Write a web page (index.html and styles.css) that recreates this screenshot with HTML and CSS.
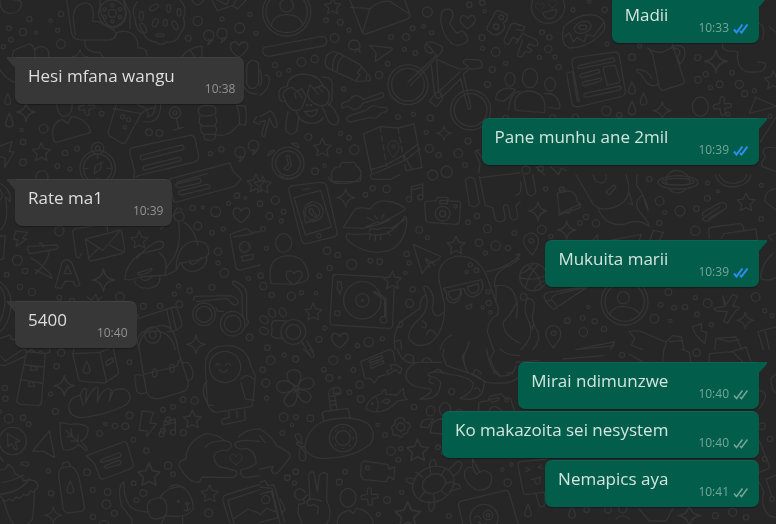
FILE: index.html
```
<!DOCTYPE html>
<html lang="sn">
<head>
<meta charset="utf-8">
<meta name="viewport" content="width=device-width, initial-scale=1">
<title>Chat</title>
<link rel="stylesheet" href="styles.css">
</head>
<body>
<svg class="wallpaper" viewBox="0 0 2328 1572" preserveAspectRatio="xMidYMid slice" aria-hidden="true">
  <defs>
    <path id="ticks" d="M2 13L7 19 19 3M14 16L17 19 29 3"/>
    <path id="star" d="M0-27L8-9 27-6 13 7 17 26 0 17-17 26-13 7-27-6-8-9Z"/>
    <path id="sparkle" d="M0-28Q3-3 28 0Q3 3 0 28Q-3 3-28 0Q-3-3 0-28Z"/>
    <path id="heart" d="M0 24C-14 15-27 4-23-10C-19-22-5-20 0-9C6-21 22-22 24-9C26 4 12 15 0 24Z"/>
    <path id="drop" d="M0-20C4-8 11 0 10 9C8 20-8 20-10 9C-11 0-4-8 0-20Z"/>
    <path id="plus" d="M-6-26Q0-30 5-25L6-7 24-8Q30-3 25 4L7 7 9 24Q3 30-4 25L-7 8-24 9Q-30 3-25-4L-8-7Z"/>
    <path id="quote" d="M12 8A16 16 0 1 1 14-12Q20 10-3 25Q4 12 0 8"/>
    <path id="pin" d="M0 34Q-25 5-22-10A22 22 0 0 1 22-10Q25 5 0 34ZM-6-9a7 7 0 1 0 14 0a7 7 0 1 0-14 0"/>
    <g id="note"><path d="M-10 16V-20L24-28V10M-10-10L24-18"/><circle cx="-17" cy="18" r="8"/><circle cx="17" cy="12" r="8"/></g>
    <g id="camera"><path d="M-48-25L-20-27-16-37H14L18-26 48-25Q54-24 54-18L50 34Q48 44 38 44L-42 38Q-52 37-51 26L-54-18Q-54-25-48-25ZM-8-28H14V-18H-8Z"/><circle cx="0" cy="12" r="22"/><circle cx="0" cy="12" r="9"/><circle cx="39" cy="-10" r="5"/></g>
    <g id="people"><ellipse cx="0" cy="-44" rx="23" ry="29"/><path d="M-45 45Q-50-5 0-5Q52 0 44 60L-35 54Q-44 54-45 45Z"/><ellipse cx="60" cy="-25" rx="16" ry="20"/><path d="M42 3Q82-2 90 40Q91 48 82 48L54 44"/></g>
    <g id="profile"><circle r="72"/><circle r="62"/><circle cy="-20" r="20"/><path d="M-46 42Q-40 8 0 8Q42 8 48 40"/></g>
    <g id="speech"><path d="M-96-30L78-68Q92-70 96-56L106-6Q107 8 94 12L-72 52-90 60-86 40-100-14Q-102-27-96-30Z"/><path d="M-66-8L50-38Q62-40 62-30Q61-26 54-24L-64 6Q-74 2-66-8ZM-58 24L46-2Q56-2 52 8L-54 36Q-66 34-58 24Z"/></g>
  </defs>
  <g id="scatter"></g>

  <!-- upper left -->
  <g>
    <path d="M0 0Q0 38 28 40Q60 42 65 12Q60-4 42 0M200 0Q205 40 215 100Q220 122 255 120H330Q356 112 344 92L295 64H278Q288 5 250 10Q218 16 220 60L226 105M255 120Q250 158 300 157L310 172M300 0Q298 66 340 84Q390 70 376 20L370 0M346 106Q350 92 376 94Q415 100 414 144Q440 140 442 168M372 0L390 40V86"/>
    <circle cx="336" cy="40" r="40"/><circle cx="337" cy="40" r="12"/>
    <circle cx="337" cy="16" r="5"/><circle cx="360" cy="28" r="5"/><circle cx="360" cy="52" r="5"/><circle cx="337" cy="64" r="5"/><circle cx="314" cy="52" r="5"/><circle cx="314" cy="28" r="5"/>
    <path d="M412 5Q392 30 405 54Q406 92 430 100Q440 124 468 126Q482 140 500 126Q534 128 540 100Q560 82 550 54Q564 26 540 0"/>
    <ellipse cx="462" cy="22" rx="7" ry="15" transform="rotate(60 462 22)"/><ellipse cx="506" cy="25" rx="6" ry="12"/><ellipse cx="466" cy="68" rx="8" ry="13" transform="rotate(25 466 68)"/><ellipse cx="525" cy="76" rx="7" ry="14" transform="rotate(-25 525 76)"/><ellipse cx="430" cy="84" rx="7" ry="16" transform="rotate(-30 430 84)"/><ellipse cx="480" cy="106" rx="13" ry="4"/><ellipse cx="496" cy="68" rx="6" ry="10"/><ellipse cx="537" cy="37" rx="6" ry="11"/><ellipse cx="424" cy="48" rx="6" ry="14"/>
    <path d="M38 172Q36 148 54 145L88 132Q108 136 104 172M104 150Q116 134 134 142Q150 150 145 172M0 210Q20 240 48 248M544 172Q566 140 606 138V172M570 150L584 170M636 0L652 32 700 16 712-8M650 0L680 14 690-6M700 20L714 26 744-6M575 0Q595 30 610 0"/>
    <path d="M740 210V250Q756 282 776 250V190Q754 170 742 194ZM724 240Q734 282 770 282M170 312Q172 344 192 350Q218 346 216 312M160 418Q150 370 186 358L204 370 214 350Q262 354 272 398L166 428ZM350 310L324 398Q326 410 340 414L366 430Q376 432 380 420L424 340M338 326L420 340M430 365Q482 374 482 312M440 350Q466 350 466 312M410 312L440 328 466 322M440 328L446 350M440 328L420 345"/>
    <circle cx="368" cy="350" r="6"/><circle cx="386" cy="359" r="6"/><circle cx="374" cy="382" r="5"/><circle cx="525" cy="338" r="17"/><circle cx="525" cy="338" r="6"/><path d="M529 354L536 386M522 390L550 382"/>
    <path d="M618 316Q590 318 596 340Q602 350 622 348L645 344Q652 324 640 318ZM600 350Q592 376 610 378H640Q656 370 646 350M604 378Q598 402 615 403H642Q656 392 645 378M612 403Q608 422 630 421Q650 420 646 403M646 403Q680 414 706 384L720 370M710 316Q720 340 718 372L736 376Q742 346 736 318Z"/>
    <path d="M0 438L36 425 28 454 42 456 14 502 15 474 0 470"/>
    <circle cx="293" cy="505" r="53"/><circle cx="293" cy="505" r="43"/><circle cx="293" cy="445" r="18"/><circle cx="293" cy="445" r="7"/><path d="M282 522L286 498 306 486 300 510ZM293 466V476M254 505H264M322 505H332M293 534V544"/>
    <use href="#speech" x="490" y="474"/>
    <path d="M770 350L760 366 780 374M0 550Q36 570 30 605L16 590Q30 670 0 690M0 568Q14 590 0 600M8 708L0 706M0 710L16 706 10 776 0 780"/>
  </g>

  <!-- upper middle -->
  <g transform="translate(780 0)">
    <use href="#profile" x="80" y="36"/>
    <path d="M270 0L306 96Q308 104 318 102L440 58Q452 52 450 44L434 0M272 22L330 26Q360 0 390 4L448 42M330 26L308 98M12 142L182 110Q202 110 200 124Q200 134 188 138L32 168Q10 170 8 154Q8 146 12 142ZM220 154Q194 160 196 190Q198 202 206 206L290 244 330 242Q334 236 326 226L300 194 234 158ZM234 160Q216 176 218 210M250 168Q230 184 232 216M304 200L292 220 300 224 288 240M320 226L318 242M328 136L396 144Q398 150 390 154L346 184 348 158Z"/>
    <path d="M284 156L300 144Q300 120 282 120 264 122 266 140 272 154 292 146Q300 148 300 158"/>
    <path d="M545 36Q560 22 574 30Q582 40 576 58L568 70 590 100 606 92Q630 112 620 126Q598 142 578 132Q548 110 542 60ZM706 36Q712 28 722 34Q746 42 742 54Q740 64 730 68Q738 84 728 92Q712 108 700 104L684 92Q676 84 686 74ZM752 74Q760 66 780 76M752 74L732 120Q734 134 746 134L758 112 776 120"/><circle cx="724" cy="52" r="7"/><circle cx="708" cy="80" r="8"/>
    <circle cx="444" cy="254" r="60"/><circle cx="444" cy="254" r="49"/><circle cx="632" cy="330" r="60"/><circle cx="632" cy="330" r="49"/>
    <path d="M444 246L530 166 498 130Q488 150 510 160Q526 156 508 140M498 130Q510 118 546 140Q552 150 536 166L452 256M530 178L600 208 616 206 626 200 610 188Q610 176 626 178L656 180Q668 184 666 202Q650 208 628 206L610 222 632 318Q634 332 624 326L602 236 550 288M514 196L524 284M530 182L536 276M600 216L540 272M524 284L508 304 530 320M540 276Q552 290 544 302L530 320"/><circle cx="535" cy="285" r="9"/>
    <path d="M82 260Q80 230 124 222Q180 222 192 264M82 260Q50 260 58 294Q62 306 74 304M186 232Q222 228 216 264V300L206 316M72 294Q62 270 96 262L110 274 126 266 138 290Q128 332 110 332Q88 334 72 294ZM104 278L108 296M114 276L126 294M142 282L150 254 160 266 186 256Q214 270 206 300Q200 320 178 316Q152 312 142 282ZM160 266L176 284M174 260L188 276M108 334Q120 370 152 370Q180 370 190 352M132 334Q152 336 172 328Q170 350 150 350ZM84 336Q76 370 78 392Q92 412 110 394L116 352M186 318L206 366Q232 386 236 360Q230 330 206 312"/><circle cx="142" cy="315" r="2"/><circle cx="153" cy="315" r="2"/>
    <path d="M250 308L268 302Q276 284 296 288L310 298 366 278Q376 284 368 292L308 310Q300 330 280 328L262 318 248 324Q240 316 250 308ZM262 350L320 330Q336 310 360 322H376Q386 326 380 334L362 340Q350 360 330 352L272 366Q256 366 262 350ZM0 210Q10 240 0 256M16 226Q30 224 28 240Q26 270 0 286M0 350L32 332Q50 350 52 380Q44 386 38 376L28 354 14 408Q2 412 6 398L16 362 0 366"/>
    <circle cx="84" cy="490" r="48"/><circle cx="84" cy="490" r="37"/><path d="M78 466L86 492 70 506 84 510 94 494 88 468ZM24 468Q26 448 44 452ZM94 430Q116 424 116 444Z"/>
    <path d="M336 524L310 402 360 380 414 384 462 372 486 502 440 512"/><path d="M360 380L380 500M414 384L438 512" stroke-dasharray="16 12"/><path d="M334 508L372 498 430 466 474 432M340 522L440 478 480 446M432 466L456 508"/><use href="#pin" x="400" y="444" transform="translate(100 113) scale(.75)"/>
    <path d="M218 545Q204 504 240 500Q240 482 266 488Q290 482 288 498Q310 506 300 545ZM658 450Q640 450 646 462L660 490 656 520M648 450L672 480 690 476"/>
    <ellipse cx="750" cy="238" rx="15" ry="20"/><path d="M706 298Q710 264 750 264L766 268Q750 292 730 304ZM746 330Q750 276 780 274"/>
  </g>

  <!-- upper right -->
  <g transform="translate(1548 0)">
    <circle cx="96" cy="20" r="50"/><path d="M80 38L122 28Q120 58 98 56Q84 54 80 38Z"/><use href="#heart" x="130" y="36" transform="scale(.55)"/><use href="#heart" x="200" y="20" transform="scale(.55)"/>
    <path d="M0 70L26 80 22 92 0 88M0 130L20 100 62 120Q70 134 60 138L38 132 34 142 48 150 42 158 28 154 18 170Q6 172 4 164L20 120M144 80Q190 36 240 46Q274 60 264 92Q220 144 160 144Q130 132 144 80ZM146 110L160 98 172 126 184 112 204 126 212 104 232 110 262 70"/><ellipse cx="200" cy="82" rx="26" ry="17" transform="rotate(-20 200 82)"/><ellipse cx="200" cy="82" rx="12" ry="7"/>
    <use href="#people" x="42" y="278"/>
    <path d="M168 190Q166 176 180 172L298 156Q306 156 310 166L328 274Q328 286 316 290L190 320Q170 322 168 310L152 222Q156 214 170 216L184 304M168 190L190 306M190 196L290 174Q298 176 296 184L190 206Q180 204 190 196ZM196 222L246 208Q254 212 250 218L196 234Q188 228 196 222ZM202 246L254 234Q260 240 252 244L204 258Q194 252 202 246ZM206 280L312 258Q318 264 312 270L210 292Q200 288 206 280ZM262 208Q262 200 270 200L298 196 312 244 308 248 274 256Z"/>
    <path d="M396 144L410 164 430 262 438 272 500 252Q508 248 504 240L474 148 470 132M400 148Q420 160 440 156L474 140M408 236Q396 208 362 208Q360 216 374 222L392 248Q410 264 426 252M470 148Q490 140 492 158L484 172 492 192Q514 170 504 144Q490 130 466 142"/>
    <path d="M620 130Q616 154 650 154Q670 150 664 168Q666 218 708 216Q752 220 748 190Q730 182 726 188M740 120Q750 80 730 70M760 80L778 96M720 290L700 340 780 320M718 292L780 318M732 428L778 354M778 444Q738 436 742 460Q752 470 744 478Q732 490 740 500L778 514"/><ellipse cx="553" cy="320" rx="24" ry="29"/>
    <path d="M60 500L86 524M104 500L128 524 136 504 150 512"/>
  </g>

  <!-- centre left -->
  <g transform="translate(0 525)">
    <path d="M508 12L520 76Q524 84 534 80L704 34 724 12 700-10 690-36 508 12M530 22L622-4M528 28Q524 36 540 38L600 24Q608 14 596 10ZM538 48L620 28Q634 30 628 40L544 60Q530 58 538 48Z"/>
    <path d="M244 236L236 250Q230 248 228 240L218 172Q218 162 230 160L300 150 322 154V168M256 192L358 166Q366 164 366 176L374 222Q374 232 364 236L274 258Q266 256 266 248L256 192L308 226 358 170M266 248L298 218M372 232L328 210M84 214L170 210Q178 216 170 222L88 236Q80 222 84 214ZM118 204Q130 204 130 216M148 226Q146 260 106 296M94 250Q116 260 142 288 158 302 156 310L106 284M166 338L186 262Q200 244 216 264L240 330Q224 340 220 320L196 318 184 340ZM192 296L202 270 214 296ZM44 180L48 168 82 172 68 190 80 192 48 214 54 196 42 192Z"/>
    <path d="M546 104Q530 90 524 112Q516 132 534 138Q556 140 552 122Q548 100 520 120L482 162M536 144Q544 210 520 250L498 280M552 142Q580 156 594 210M374 312Q376 270 420 236L480 222Q494 216 490 204Q478 188 440 220L410 250M374 312Q386 320 420 306L494 300Q502 280 494 250L478 232M496 302L528 286M528 286Q530 212 574 200Q628 190 626 236Q624 252 540 264ZM404 318Q408 340 444 340Q482 338 480 302M422 310Q436 326 458 304M544 264Q550 290 582 290Q622 280 620 246M568 258Q576 282 604 248M414 294L454 280Q460 284 450 290L424 300Q410 300 414 294"/>
    <path d="M690 178L740 160 754 172 780 170M690 178L708 280 718 286 780 270M700 186L760 176M724 244L760 238 758 252 728 258Z"/><circle cx="734" cy="216" r="16"/><use href="#heart" x="735" y="216" transform="translate(368 108) scale(.5)"/>
    <path d="M580 376L584 364 690 362Q714 368 714 384 706 396 694 384L680 370 590 380M704 332Q692 322 700 318Q744 330 740 370V432L746 440 738 456M728 426L726 360Q720 340 704 332M648 398L652 408 670 410"/><circle cx="612" cy="418" r="34"/><circle cx="612" cy="418" r="24"/><circle cx="698" cy="446" r="37"/><circle cx="698" cy="446" r="25"/>
    <path d="M0 320Q40 350 32 400 26 450 0 470M0 334Q30 370 0 440M404 434L520 396Q536 396 546 450Q540 464 520 468L500 470M500 404L514 466M514 398L528 462M416 524Q420 468 460 468Q512 466 526 524M0 490L30 480 34 492 72 500"/><circle cx="458" cy="480" r="24"/><circle cx="458" cy="480" r="10"/>
    <path d="M262 366L274 376 288 358 294 376 306 366"/>
  </g>

  <!-- centre -->
  <g transform="translate(780 525)">
    <path d="M86 46Q86 34 98 32L182 22Q196 22 200 34L232 174Q230 184 220 186L140 206Q128 206 124 194ZM102 68L182 46 214 156 136 180ZM130 44L150 40"/><circle cx="177" cy="182" r="6"/><circle cx="157" cy="112" r="22"/><path d="M133 120L136 144 154 138A29 29 0 1 0 133 120ZM148 102Q144 116 166 126L170 120 160 114 158 102Z"/>
    <path d="M250 158L284 104Q296 94 330 102Q350 74 376 78Q410 80 436 100Q434 108 390 130L350 150 310 160Q290 158 250 158ZM260 176Q254 190 270 202Q320 240 370 230Q424 222 438 160Q444 128 434 124Q410 160 380 176Q350 184 324 176Q300 180 260 176ZM318 156L354 140 360 148 390 134M322 128L340 136M344 122L352 132M372 118L366 130M328 168Q330 158 352 164Q370 154 394 160L440 130M332 178L328 192M346 178V196M362 178V194M382 170L392 182"/>
    <use href="#camera" x="548" y="104"/>
    <path d="M616 14Q630 0 644 12L658 84Q648 102 628 90ZM658 4L676 92 698 98 706 134Q722 148 736 132L730 96Q734 86 744 92L752 130Q764 142 774 126L768 92 780 80M660 8L780-6M206 6Q210 26 246 26 300 24 302 0M330 0L334 12 390 14 418 0M58 0Q82 20 118 0"/>
    <use href="#note" x="464" y="55"/><path d="M460 208L542 244Q540 254 510 264L486 296ZM496 250L510 278M496 250L524 270"/>
    <ellipse cx="71" cy="204" rx="24" ry="28"/><path d="M34 326Q24 290 38 262Q56 242 88 242Q130 244 142 286 152 312 134 320L100 328Z"/><use href="#heart" x="102" y="306"/>
    <path d="M218 306Q220 296 232 298L370 306M402 340L398 450Q396 462 384 460L218 450Q208 448 210 436L218 306M232 320H244V334Q250 342 242 346L240 358 236 346Q228 340 234 334ZM338 350L374 374V426M344 348L378 370V424"/><circle cx="307" cy="376" r="56"/><circle cx="307" cy="376" r="20"/><circle cx="307" cy="376" r="3"/><circle cx="371" cy="434" r="10"/><circle cx="232" cy="415" r="8"/>
    <path d="M540 330Q522 260 588 244Q660 236 686 320L708 382Q720 398 712 420Q686 430 682 470L700 524M540 330L554 390Q556 470 510 504 470 524 446 490Q444 460 480 430Q510 400 498 360Q484 330 500 334Q530 360 516 400Q526 440 552 410M494 362Q480 370 480 400L420 442Q396 480 406 524M680 290Q740 280 780 240M704 330Q700 290 752 270L780 250M704 334Q760 320 770 380Q760 410 730 440Q726 480 780 504M708 334V382M486 438Q500 440 498 456Q490 462 486 454M500 480Q510 450 530 480M418 440Q436 440 424 456H414M408 500Q426 484 424 524"/><path d="M550 340L664 314 668 326Q672 356 640 366 618 366 612 340L604 342Q610 370 584 384 556 384 560 354ZM566 350L600 342Q606 362 586 374 568 378 566 350ZM622 336L654 326Q662 346 646 354 626 358 622 336ZM618 394L636 386Q634 404 622 402ZM540 524Q550 490 576 480M620 524L628 500"/>
    <ellipse cx="36" cy="414" rx="10" ry="14" transform="rotate(-25 36 414)"/><ellipse cx="68" cy="412" rx="10" ry="14" transform="rotate(-30 68 412)"/><ellipse cx="12" cy="434" rx="10" ry="14" transform="rotate(-50 12 434)"/><ellipse cx="12" cy="468" rx="10" ry="14" transform="rotate(-60 12 468)"/><circle cx="100" cy="471" r="37"/><circle cx="100" cy="471" r="22"/><path d="M78 438L44 436Q32 440 36 460L34 482Q40 492 66 490M126 502L150 540M140 498L160 530"/>
  </g>

  <!-- centre right -->
  <g transform="translate(1548 525)">
    <path d="M0 60Q18 60 14 20M22 0L34 56Q46 70 60 52L50 0M180 0Q210 50 230 86Q250 110 290 98Q350 80 336 20L330 0M246 100Q270 160 330 146 370 130 398 154Q400 140 370 110 350 80 380 60L396 108Q396 80 362 30 360 0 366 0M280 60L270 50 294 30 300 36ZM232 0Q234 24 260 24 274 14 270 0M340 54L350 90 336 84"/>
    <path d="M140 42L124 56 130 116 190 88Q196 94 192 98L128 120M140 50Q180 40 184 80L194 88M150 112Q164 120 164 102"/><circle cx="138" cy="44" r="8"/>
    <ellipse cx="486" cy="22" rx="60" ry="20"/><ellipse cx="486" cy="20" rx="48" ry="10"/><path d="M450 24Q450-10 480-14Q520-10 522 24M460 44Q484 64 512 42M598 0Q610 36 652 36 700 30 704 0M610 0Q620 24 652 26 690 20 692 0M560 122Q556 114 570 106L616 82Q636 82 630 100L580 136Q562 142 560 130L610 96M578 130L624 104M778 40Q742 50 748 80L778 104M580 190L578 166Q576 158 590 156L670 146Q684 146 684 170M616 190L624 176 720 162 724 194M778 174L756 184 768 196M734 310Q734 270 770 236M736 312Q760 320 778 308"/>
    <use href="#pin" x="46" y="206" transform="rotate(-6 46 206)"/><use href="#pin" x="112" y="484"/>
    <path d="M282 196L376 178 370 196M402 196L412 166 442 172 430 196M230 196L244 180 246 196M0 240L12 236M0 260L10 236"/>
    <circle cx="52" cy="306" r="41"/><path d="M12 308Q52 320 92 300M34 270Q74 300 76 340M68 268Q36 300 28 340M12 296Q36 290 52 266M92 316Q66 320 54 346"/>
    <path d="M84 366Q82 350 120 350L196 336M84 366L90 380 106 374Q108 360 130 356L210 336M90 380L112 404 238 320M106 374L120 390"/>
    <circle cx="326" cy="380" r="70"/><circle cx="326" cy="380" r="59"/><circle cx="322" cy="368" r="18"/><path d="M280 420Q290 394 322 394 360 398 370 416"/>
    <path d="M34 370Q62 370 52 410Q42 440 66 470Q74 500 50 524M34 370Q20 400 34 430 52 460 40 490 30 510 14 524M56 450Q46 452 50 462M0 370Q8 400 0 430"/>
    <path d="M620 362L630 390 650 358 664 364 650 394 668 396Q672 404 660 406L634 444 622 440 634 410 600 408 594 400 626 394ZM528 456L556 446 556 468 572 472 566 506 540 480ZM340 470Q370 462 400 480L446 500M340 470L356 490 346 510 380 524M446 524L450 500 470 482 496 486 504 524M460 500L500 496M596 524L600 490 660 486 678 524M600 490L640 500 670 494M726 470L778 456M726 470L742 524M748 470L760 524M180 524L296 500 284 524"/>
  </g>

  <!-- lower left -->
  <g transform="translate(0 1047)">
    <path d="M80 8L50 154Q52 166 64 166L112 170Q122 170 124 162L136 14ZM74 0L82 10 94 2 110 12 124 6 132 14 148 10 150 0M72 48L132 54M60 92L126 102M92 64V54Q104 42 112 62ZM86 112V102Q98 90 104 112ZM0 48L14 50 80 20M0 20L16 36 70 0"/>
    <path d="M218 14L236 90Q240 98 250 98L314 102 348 80 356 72 340 0M218 14L300 10 320 100M300 10L344-10M318 38L338 26 340 38 320 50ZM218 14L222 0"/><use href="#drop" x="260" y="56"/>
    <path d="M418 0L430 76 440 130Q450 154 480 148L550 128Q566 120 564 100L540 22 534 0M430 76L530 52 542 26M426 80Q404 70 404 90L410 126Q418 140 440 130M546 44Q568 30 578 66 582 92 566 94M418 0Q400-40 440-56L480-70Q524-76 534 0"/><ellipse cx="464" cy="72" rx="7" ry="12"/><ellipse cx="516" cy="58" rx="7" ry="12"/>
    <path d="M622 160L616 60Q612-10 680-10Q740-10 752 50L766 80 762 130 756 172 650 190Q624 184 622 160ZM622 98Q606 106 612 140L624 168 640 170M724 90Q740 70 762 90M722 100L736 150 764 154M648 50Q650 38 660 48M676 48Q684 38 692 48M658 62Q670 78 682 62M686 188L688 206 668 210Q660 222 672 226L736 214 734 182M710 186L712 206"/><circle cx="675" cy="54" r="47"/>
    <path d="M206 172Q206 148 240 138 252 110 260 122L256 162Q280 110 294 116L292 160Q310 110 334 122L328 156 340 124Q386 110 390 144 392 160 370 172Q310 200 240 206 206 202 206 172ZM240 138L250 170"/>
    <circle cx="38" cy="276" r="41"/><path d="M22 254L24 292 36 284 44 302 52 300 46 280 60 276ZM98 306L148 246 164 326 132 308ZM180 220Q180 280 190 302 214 308 236 286L256 304Q264 304 260 296L242 276Q266 268 264 236 250 222 210 226ZM198 244L236 280M212 240L216 258M202 262L218 262M234 258V274M214 276L234 276"/>
    <path d="M260 320L372 278Q380 278 382 286L400 346Q400 356 390 360L310 390Q300 390 298 382L284 344ZM304 332L356 312Q368 314 360 324L308 340Q298 340 304 332ZM316 350L356 334Q368 336 360 346L318 358Q308 356 316 350ZM418 244L426 186 460 190 450 222 470 224 440 262 442 246Z"/><use href="#note" x="502" y="238"/>
    <path d="M186 354L190 342 206 338 212 352Q232 360 238 390L254 476Q252 486 240 488L200 492 190 484 176 380Q176 362 186 354ZM190 356L210 352"/><use href="#drop" x="211" y="416"/>
    <path d="M0 364Q20 362 24 346 46 360 44 374 72 384 70 396 110 386 114 410 112 420 104 424L98 510 84 524M0 436Q60 430 88 390M4 400Q30 400 70 378M8 450L30 510 40 524M0 440L16 458 26 450 38 456 48 444 60 448 70 436 82 440 92 426 104 430M62 346Q66 336 84 340 90 346 80 352ZM0 324L10 338"/>
    <path d="M598 400Q570 400 554 376L540 356Q530 336 558 330 558 280 616 254 650 254 676 276M598 400L606 384 700 386Q716 374 708 366 690 360 664 354 644 350 642 322 646 304 672 304 694 306 694 284 680 270 648 278 628 280 616 294M704 284Q708 306 740 298 770 310 768 344 744 360 724 362 716 378 736 386L780 380M704 284Q716 268 780 278M716 264Q736 240 780 240"/><use href="#heart" x="708" y="330" transform="translate(177 82) scale(.75)"/>
    <path d="M372 398Q350 410 364 470L396 510V524M372 398Q370 470 410 484L446 490M446 490Q430 450 480 446 504 448 500 490L484 524M446 490Q450 524 500 500M480 446Q500 410 550 414 580 440 580 480 560 510 500 500M508 414Q530 400 552 418M548 500V524M556 462H568L562 472ZM562 472V480M552 482Q560 490 570 478"/><circle cx="535" cy="457" r="3"/>
    <path d="M780 406L676 438Q668 442 668 452L690 524M780 422L684 454 702 524M700 510L744 480 780 494"/>
  </g>

  <!-- lower middle -->
  <g transform="translate(780 1047)">
    <path d="M104 110C70 92 76 62 104 62C130 66 124 90 114 108C134 76 162 84 162 104C158 122 136 122 118 122C148 124 162 142 146 158C128 166 116 146 111 130C114 154 100 176 84 172C62 160 72 142 98 124C72 136 50 134 50 112C54 90 80 90 104 110ZM96 120H124M102 132L108 122 120 132M100 106L108 114 118 104"/><circle cx="109" cy="118" r="8"/>
    <path d="M130 0L154 24Q166 28 160 14L150 0M302 38L388 2Q396 2 400 10L406 38M302 38L314 86Q318 92 330 88L344 102 354 84 380 76M328 34L366 20 368 28 330 42ZM330 50L370 34 372 42 334 58ZM380 66L396 60 390 48 408 46 426 58 420 74 408 62 386 76Z"/>
    <path d="M134 296Q140 240 192 216 280 194 326 226 352 256 330 286 280 326 200 328 148 330 134 296ZM192 216L186 194Q188 188 200 186L264 178 270 206M212 182L206 134Q208 114 236 116 244 120 242 134L224 140 230 178M222 118L220 134 238 132M208 142L226 140M208 156L228 154M210 168L228 166M134 294Q106 290 110 280L128 284M122 284Q94 256 114 254 130 258 122 284ZM122 292Q112 326 122 334 142 340 136 312Z"/><circle cx="249" cy="267" r="41"/><circle cx="249" cy="267" r="22"/><circle cx="249" cy="267" r="31" stroke-dasharray="3 21"/>
    <path d="M318 180Q320 150 364 134Q368 120 376 122L378 136 410 138 430 118 432 140 442 152 412 156Q380 194 336 188ZM346 142Q362 160 350 186M364 160Q380 144 390 154 384 166 372 162"/><circle cx="337" cy="164" r="2"/>
    <path d="M412 0Q430 50 470 40L544 40M470 40Q430 60 440 90 456 120 510 118 524 130 480 150 540 156 542 100 530 84 504 80 510 60 570 76 630 84 640 104 640 130 600 148 660 160 670 120L674 100Q660 80 620 70L560 50 548 20 552 0M620 0Q600 30 624 70L680 100Q760 110 780 80M432 26Q440 8 460 22V38M484 40Q500 14 516 38M520 70Q536 50 550 74M614 42Q600 20 616 10M640 74Q644 50 664 74M520 104Q500 100 512 88M644 120Q656 110 660 128M680 0Q690 70 720 80 760 86 768 50M704 4L690 30 708 70M720 0Q740 20 780 20M700 72Q714 60 718 82M740 80Q744 62 758 74"/>
    <path d="M656 184V164Q660 156 684 156L690 142 724 134 734 146 752 148 762 184M690 152L712 146Q722 148 716 154L696 160ZM688 184Q700 160 724 184"/><circle cx="740" cy="154" r="5"/>
    <ellipse cx="512" cy="186" rx="13" ry="15"/><ellipse cx="555" cy="181" rx="17" ry="20"/><path d="M482 234Q482 206 520 210L504 236ZM512 252Q510 210 548 210L568 212M512 252L568 256"/>
    <path d="M416 206L430 208 434 218 446 222 452 234 444 240 444 250 430 256 424 266 412 258 400 258 398 246 394 234 404 226 406 214Z"/><circle cx="422" cy="234" r="12"/>
    <path d="M302 380L304 342 312 336 380 346Q386 346 386 360L404 354 402 392 386 382 378 398 310 392Z"/><circle cx="323" cy="356" r="6"/>
    <ellipse cx="520" cy="406" rx="64" ry="52" transform="rotate(-25 520 406)"/><ellipse cx="522" cy="404" rx="36" ry="28" transform="rotate(-25 522 404)"/><path d="M460 388Q430 384 440 398L458 406M508 352Q510 330 522 332 532 344 526 352M568 360L592 338Q610 336 604 352 600 370 580 380M580 404Q604 404 600 418L570 426M506 456Q504 484 514 488 526 480 522 456M488 384L468 370M512 376L510 354M542 380L556 360M556 402L580 398M544 426L562 440M520 434L524 454M496 426L480 446"/>
    <path d="M638 356Q610 350 614 386 630 420 660 424 700 420 694 380 680 356 658 370L650 376Q634 360 638 330L658 368"/>
    <path d="M140 460L150 446 146 380Q150 364 162 370L172 428 178 380Q190 364 202 376L200 456Q214 480 208 510L200 524M140 460Q144 476 160 466L176 474 172 494M142 458Q150 444 184 456M104 438Q104 416 124 420L136 430M104 438Q112 460 130 450L144 436M116 464L114 490 126 524M130 450L134 462 120 466"/>
    <ellipse cx="264" cy="446" rx="24" ry="28"/><path d="M232 524Q230 490 270 484L280 494 290 478Q332 484 340 524M596 470Q592 460 604 456L738 424Q746 424 748 434L774 524M596 470L608 524"/><circle cx="672" cy="508" r="42"/><circle cx="684" cy="498" r="14"/><circle cx="684" cy="498" r="5"/><path d="M644 506Q652 496 662 508M656 518Q662 530 680 524"/>
    <path d="M0 240Q34 260 50 290L86 310Q96 322 82 336L54 370Q40 380 34 364L40 352 0 360M0 260L14 280M0 400L14 394 24 410 42 408 74 520M0 414L36 418 60 524M0 436L34 426 54 506 0 520M0 498L20 478 52 490M60 450L76 480 68 490"/><circle cx="17" cy="452" r="12"/>
  </g>

  <!-- lower right -->
  <g transform="translate(1548 1047)">
    <path d="M0 40L70 34M140 30L264 20M180 2L296-10M340 16L380 38M444 0L440 36M496 0L520 10 524 38M580 40V14L650 8 680 38M640 10L690-6 704 36M778 76L764 90 770 122 778 130M730 124Q760 130 742 160L730 178M730 276L760 350Q762 360 750 362L730 370M730 400L744 430Q730 470 760 500L778 506M778 380L750 390 766 440M6 350L22 430Q24 438 34 436L98 428M6 350Q4 340 14 338L92 330M60 436L70 470Q82 480 88 462L86 430M30 356L42 362 30 368M76 348L66 356 80 358M46 392L76 384M54 390Q60 414 72 400V386M370 480L400 516H450L470 480M300 510Q320 490 340 510"/>
    <use href="#drop" x="36" y="486"/><use href="#drop" x="168" y="490"/><use href="#drop" x="122" y="472" transform="translate(61 236) scale(.5)"/>
  </g>
</svg>

<main class="chat">
  <ol class="messages">
    <li class="message sent tail"><p class="text">Madii</p><span class="meta"><time>10:33</time><svg class="ticks read" viewBox="0 0 30 22" role="img" aria-label="Read"><use href="#ticks"/></svg></span></li>
    <li class="message received tail"><p class="text">Hesi mfana wangu</p><span class="meta"><time>10:38</time></span></li>
    <li class="message sent tail"><p class="text">Pane munhu ane 2mil</p><span class="meta"><time>10:39</time><svg class="ticks read" viewBox="0 0 30 22" role="img" aria-label="Read"><use href="#ticks"/></svg></span></li>
    <li class="message received tail"><p class="text">Rate ma1</p><span class="meta"><time>10:39</time></span></li>
    <li class="message sent tail"><p class="text">Mukuita marii</p><span class="meta"><time>10:39</time><svg class="ticks read" viewBox="0 0 30 22" role="img" aria-label="Read"><use href="#ticks"/></svg></span></li>
    <li class="message received tail"><p class="text">5400</p><span class="meta"><time>10:40</time></span></li>
    <li class="message sent tail"><p class="text">Mirai ndimunzwe</p><span class="meta"><time>10:40</time><svg class="ticks" viewBox="0 0 30 22" role="img" aria-label="Delivered"><use href="#ticks"/></svg></span></li>
    <li class="message sent"><p class="text">Ko makazoita sei nesystem</p><span class="meta"><time>10:40</time><svg class="ticks" viewBox="0 0 30 22" role="img" aria-label="Delivered"><use href="#ticks"/></svg></span></li>
    <li class="message sent"><p class="text">Nemapics aya</p><span class="meta"><time>10:41</time><svg class="ticks" viewBox="0 0 30 22" role="img" aria-label="Delivered"><use href="#ticks"/></svg></span></li>
  </ol>
</main>
<script src="wallpaper.js"></script>
</body>
</html>
```

FILE: styles.css
```
* {
  box-sizing: border-box;
}

body {
  margin: 0;
  background: #262626;
  font-family: "Open Sans", "Noto Sans", sans-serif;
  overflow: hidden;
}

.wallpaper {
  position: fixed;
  inset: 0;
  width: 100%;
  height: 100%;
  fill: none;
  stroke: #343434;
  stroke-width: 4;
  stroke-linecap: round;
  stroke-linejoin: round;
}

.chat {
  position: relative;
  display: flex;
  flex-direction: column;
  justify-content: flex-end;
  height: 100vh;
  padding: 0 17px 17px 15px;
}

.messages {
  display: flex;
  flex-direction: column;
  gap: 2px;
  margin: 0;
  padding: 0;
  list-style: none;
}

.message {
  position: relative;
  display: flex;
  gap: 30px;
  min-height: 47px;
  margin-top: 0;
  padding: 6px 9px 6px 13px;
  border-radius: 7px;
  box-shadow: 0 1px 1px rgba(0, 0, 0, 0.3), inset 0 1px 0 rgba(255, 255, 255, 0.05);
}

.message.tail {
  margin-top: 12px;
}

.received {
  align-self: flex-start;
  background: #373737;
  color: #dedede;
}

.sent {
  align-self: flex-end;
  padding-right: 11px;
  background: #025e4b;
  color: #d3e5df;
}

.received.tail {
  border-top-left-radius: 0;
}

.sent.tail {
  border-top-right-radius: 0;
}

.tail::before {
  content: "";
  position: absolute;
  top: 0;
  width: 9px;
  height: 12px;
  background: inherit;
}

.received.tail::before {
  right: 100%;
  margin-right: -1px;
  clip-path: polygon(0 0, 100% 0, 100% 100%, 0 15%);
}

.sent.tail::before {
  left: 100%;
  margin-left: -1px;
  clip-path: polygon(0 0, 100% 0, 100% 15%, 0 100%);
}

.text {
  margin: 0;
  font-size: 17px;
  line-height: 26px;
}

.meta {
  display: flex;
  align-items: center;
  align-self: flex-end;
  gap: 4px;
  font-size: 12px;
  line-height: 18px;
  color: #929292;
}

.sent .meta {
  color: #74a699;
}

.ticks {
  width: 15px;
  height: 11px;
  fill: none;
  stroke: #74a699;
  stroke-width: 3;
}

.ticks.read {
  stroke: #2f8df0;
  stroke-width: 4;
}
```

FILE: wallpaper.js
```
// Small shapes scattered between the large doodles, grouped by tile.
// dots: [cx, cy, radius]; shapes: [symbol, cx, cy, scale]
const tiles = [
  { x: 0, y: 0,
    dots: [[88,57,8],[183,42,8],[152,62,5],[173,91,6],[27,85,7],[69,96,11],[108,98,4],[33,119,7],[10,140,6],[183,132,13],[593,63,14],[666,57,6],[719,84,15],[750,43,6],[768,100,6],[565,115,9],[131,386,13],[65,390,5],[69,426,8],[305,341,7],[447,397,10],[478,399,10],[195,459,8],[231,446,7],[69,487,10],[172,498,7],[210,507,6],[631,461,6],[664,448,8],[126,530,18]],
    shapes: [["heart",717,146,1.1],["drop",23,298,.9],["drop",28,362,1.1],["sparkle",78,336,1],["plus",260,322,.9],["star",124,455,1],["quote",626,110,1],["quote",666,104,1],["quote",720,460,1],["quote",760,440,1],["sparkle",240,170,.8]] },
  { x: 780, y: 0,
    dots: [[198,61,7],[241,67,9],[267,90,6],[502,36,15],[458,85,7],[491,79,5],[515,98,6],[393,111,7],[438,111,10],[433,148,6],[466,159,7],[383,191,7],[357,225,11],[224,114,13],[164,177,11],[124,186,13],[45,195,8],[57,222,7],[86,211,6],[251,267,6],[414,351,7],[460,343,6],[511,354,9],[145,411,10],[242,400,6],[267,413,7],[283,449,14],[237,452,7],[194,497,5],[165,514,10],[628,14,8],[667,8,8],[674,34,5],[666,113,9],[707,156,13],[668,145,6],[737,190,6],[697,209,9],[682,253,9],[508,445,12],[536,465,8],[595,460,13],[624,423,9],[499,397,6],[615,495,7],[518,525,15],[560,515,17],[737,355,9]],
    shapes: [["star",218,18,.9],["heart",623,64,.95],["sparkle",552,400,.8],["star",187,442,1]] },
  { x: 1548, y: 0,
    dots: [[171,30,6],[220,5,5],[266,29,8],[78,97,7],[100,112,8],[97,147,11],[70,172,6],[117,171,6],[128,201,8],[273,132,6],[371,138,6],[348,172,10],[545,173,9],[546,239,10],[569,223,8],[583,263,6],[611,253,10],[648,218,7],[670,253,12],[686,281,9],[715,272,6],[271,333,14],[310,345,8],[110,352,8],[178,352,9],[636,342,6],[762,349,6],[30,510,12],[74,506,8]],
    shapes: [["sparkle",600,184,1.2],["star",772,240,1],["drop",348,265,1],["drop",383,298,1],["drop",348,325,1.1],["sparkle",439,332,1],["plus",619,318,1]] },
  { x: 0, y: 525,
    dots: [[178,168,14],[52,256,15],[75,288,8],[20,299,7],[60,336,8],[96,351,11],[178,368,7],[216,378,8],[578,99,8],[608,97,4],[647,110,15],[686,85,6],[711,62,8],[736,69,4],[593,153,12],[636,173,7],[670,162,6],[654,230,11],[654,264,6],[673,294,13],[636,337,9],[745,310,6],[536,333,6],[523,357,6],[569,347,8],[360,366,13],[430,394,9],[480,393,8],[538,388,10],[408,422,6],[749,487,10]],
    shapes: [["star",418,194,.95],["star",768,24,1],["heart",724,118,1.05],["sparkle",310,315,1.2],["sparkle",588,508,1]] },
  { x: 780, y: 525,
    dots: [[46,76,12],[28,123,10],[71,110,7],[64,138,6],[9,162,7],[0,86,8],[19,220,6],[201,227,11],[233,240,8],[209,279,8],[275,268,15],[331,257,7],[359,260,9],[338,40,8],[316,59,7],[380,42,11],[478,165,10],[502,188,6],[440,237,8],[448,264,6],[436,294,5],[458,343,8],[449,385,12],[624,142,7],[651,123,8],[682,161,12],[763,174,7],[657,203,11],[707,212,14],[744,219,8],[676,234,6],[631,269,6],[620,291,5],[649,286,7],[684,350,6],[686,384,8],[668,397,5],[691,412,5],[178,302,7],[10,333,11],[35,360,8],[94,364,12],[124,353,6],[168,354,5],[194,459,6],[177,493,9],[326,501,14],[367,491,6],[292,512,6],[2,302,8],[22,518,8]],
    shapes: [["star",8,28,.95],["sparkle",257,68,1],["star",588,210,1],["star",397,315,1],["star",160,410,.95],["heart",239,494,1.05]] },
  { x: 1548, y: 525,
    dots: [[89,42,6],[210,126,8],[192,144,7],[240,145,11],[77,164,13],[105,184,6],[400,12,8],[431,78,13],[446,112,6],[492,108,15],[541,101,8],[574,70,9],[606,49,4],[430,144,8],[538,167,14],[736,132,7],[736,31,6],[575,24,6],[154,437,8],[200,429,7],[236,439,8],[202,471,13],[264,462,8],[217,396,5],[23,366,10],[457,351,10],[434,389,7],[474,398,7],[507,396,8],[538,368,6],[575,385,13],[543,418,7],[586,449,6],[415,431,13],[463,438,5],[719,366,13],[746,407,6],[768,422,6]],
    shapes: [["sparkle",66,108,1],["sparkle",152,165,1],["star",690,81,1],["sparkle",688,436,.9]] },
  { x: 0, y: 1047,
    dots: [[183,11,11],[170,52,8],[152,135,6],[166,187,9],[15,117,8],[16,149,8],[26,209,13],[69,206,8],[86,226,7],[388,40,7],[389,199,10],[345,231,8],[376,232,10],[316,225,5],[299,253,9],[400,272,7],[439,305,8],[489,182,7],[519,174,7],[549,152,8],[584,155,11],[504,212,8],[489,245,7],[550,251,9],[504,350,11],[519,376,7],[261,370,10],[145,366,6],[153,433,8],[278,423,7],[323,429,10],[319,466,13],[343,493,9],[279,504,8],[401,403,7],[430,432,10],[409,453,7],[626,492,12],[312,528,14],[0,188,5]],
    shapes: [["sparkle",193,110,1.1],["star",577,210,1],["star",447,376,1.25],["star",629,433,.95],["sparkle",160,499,.9]] },
  { x: 780, y: 1047,
    dots: [[32,34,13],[73,18,6],[107,30,9],[8,62,8],[17,102,12],[20,147,6],[220,34,13],[264,23,7],[192,62,7],[208,87,10],[238,86,4],[280,63,7],[299,107,11],[268,130,7],[302,150,10],[462,174,8],[575,128,9],[598,192,11],[71,205,13],[108,204,7],[151,208,10],[96,228,5],[67,252,7],[353,228,5],[375,258,7],[393,306,13],[422,299,6],[415,332,7],[534,295,7],[553,310,8],[255,368,7],[238,399,9],[82,386,8],[107,368,8],[103,402,6],[381,453,10],[425,430,6],[355,496,6],[567,501,7],[727,362,5],[755,346,5],[743,401,11]],
    shapes: [["star",473,303,1.2],["plus",329,443,.95],["star",443,496,1.4]] },
  { x: 1548, y: 1047,
    dots: [[318,18,8],[542,11,11],[738,232,10],[762,270,8],[746,330,7],[768,450,7],[276,482,10],[320,480,12],[212,482,8],[598,500,9],[650,490,12],[690,505,8]],
    shapes: [["sparkle",520,500,1.2]] }
];

const ns = "http://www.w3.org/2000/svg";
const scatter = document.getElementById("scatter");

for (const tile of tiles) {
  for (const [cx, cy, r] of tile.dots) {
    const dot = document.createElementNS(ns, "circle");
    dot.setAttribute("cx", tile.x + cx);
    dot.setAttribute("cy", tile.y + cy);
    dot.setAttribute("r", r);
    scatter.append(dot);
  }
  for (const [name, cx, cy, scale] of tile.shapes) {
    const shape = document.createElementNS(ns, "use");
    shape.setAttribute("href", "#" + name);
    shape.setAttribute("transform", `translate(${tile.x + cx} ${tile.y + cy}) scale(${scale})`);
    scatter.append(shape);
  }
}
```
